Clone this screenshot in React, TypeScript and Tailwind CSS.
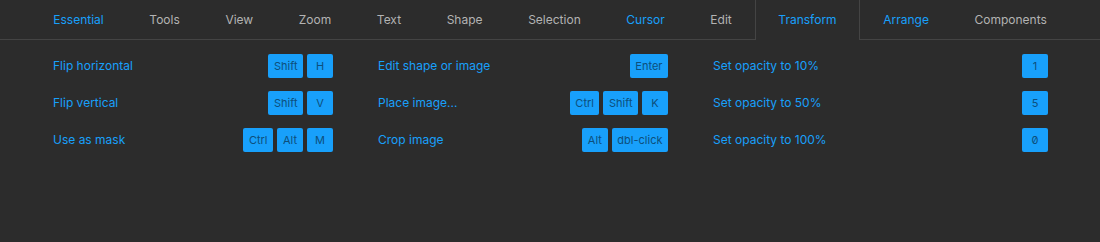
import React from "react";

const tabs: { name: string; blue?: boolean; active?: boolean }[] = [
  { name: "Essential", blue: true },
  { name: "Tools" },
  { name: "View" },
  { name: "Zoom" },
  { name: "Text" },
  { name: "Shape" },
  { name: "Selection" },
  { name: "Cursor", blue: true },
  { name: "Edit" },
  { name: "Transform", blue: true, active: true },
  { name: "Arrange", blue: true },
  { name: "Components" },
];

const cols: { label: string; keys: string[] }[][] = [
  [
    { label: "Flip horizontal", keys: ["Shift", "H"] },
    { label: "Flip vertical", keys: ["Shift", "V"] },
    { label: "Use as mask", keys: ["Ctrl", "Alt", "M"] },
  ],
  [
    { label: "Edit shape or image", keys: ["Enter"] },
    { label: "Place image...", keys: ["Ctrl", "Shift", "K"] },
    { label: "Crop image", keys: ["Alt", "dbl-click"] },
  ],
  [
    { label: "Set opacity to 10%", keys: ["1"] },
    { label: "Set opacity to 50%", keys: ["5"] },
    { label: "Set opacity to 100%", keys: ["0"] },
  ],
];

export default function App() {
  return (
    <div className="w-[1100px] h-[242px] bg-[#2c2c2c] font-['Inter',sans-serif] overflow-hidden">
      <div className="flex h-[40px]">
        <div className="w-[30.5px] border-b border-[#444444]" />
        {tabs.map((t) => (
          <div
            key={t.name}
            className={
              "h-[40px] px-[22.8px] flex items-center text-[12px] " +
              (t.blue ? "text-[#18a0fb] " : "text-[#b3b3b3] ") +
              (t.active
                ? "border-x border-[#444444]"
                : "border-b border-[#444444]")
            }
          >
            {t.name}
          </div>
        ))}
        <div className="flex-1 border-b border-[#444444]" />
      </div>
      <div className="grid grid-cols-[280px_290px_335px] gap-x-[45px] pl-[53px] pt-[14px]">
        {cols.map((col, ci) => (
          <div key={ci} className="flex flex-col gap-[13px]">
            {col.map((r) => (
              <div key={r.label} className="flex items-center justify-between h-[24px]">
                <span className="text-[12px] text-[#18a0fb]">{r.label}</span>
                <div className="flex gap-[4px]">
                  {r.keys.map((k) => (
                    <span
                      key={k}
                      className="h-[24px] min-w-[26px] px-[5.5px] rounded-[2px] bg-[#18a0fb] text-[#0d4f7c] text-[11px] flex items-center justify-center [font-feature-settings:'zero']"
                    >
                      {k}
                    </span>
                  ))}
                </div>
              </div>
            ))}
          </div>
        ))}
      </div>
    </div>
  );
}
